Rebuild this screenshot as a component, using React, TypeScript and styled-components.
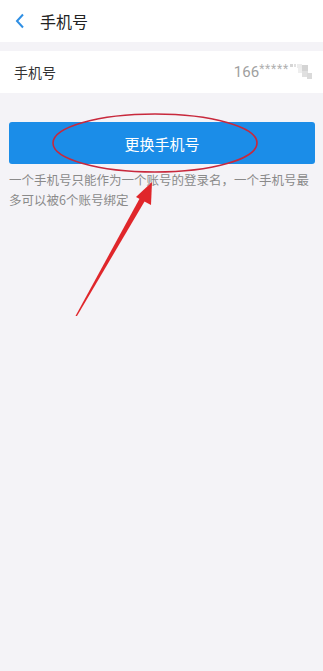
import React from "react";
import styled, { createGlobalStyle } from "styled-components";

const GlobalStyle = createGlobalStyle`
  html, body {
    margin: 0;
    padding: 0;
    background: #f4f3f7;
  }
  body {
    font-family: "Noto Sans CJK SC", "Liberation Sans", sans-serif;
  }
`;

const Page = styled.div`
  position: relative;
  width: 323px;
  height: 671px;
  background: #f4f3f7;
  overflow: hidden;
`;

const Header = styled.div`
  height: 42px;
  background: #ffffff;
  display: flex;
  align-items: center;
  padding-left: 14px;
  gap: 14px;
`;

const Title = styled.div`
  font-size: 16px;
  color: #222;
  line-height: 1;
`;

const Section = styled.div`
  margin-top: 9px;
  background: #ffffff;
`;

const Row = styled.div`
  height: 42px;
  display: flex;
  align-items: center;
  justify-content: space-between;
  padding: 0 11px 0 14px;
`;

const Label = styled.span`
  font-size: 14px;
  color: #333;
`;

const Value = styled.span`
  display: flex;
  align-items: center;
  font-size: 15px;
  color: #a0a0a0;
  font-family: "Roboto", "Liberation Sans", sans-serif;
`;

const Stars = styled.span`
  font-size: 12px;
  letter-spacing: 0.8px;
  margin-top: -6px;
  color: #b0b0b0;
`;

const Body = styled.div`
  padding: 29px 8px 0 9px;
`;

const ChangeButton = styled.button`
  width: 306px;
  height: 42px;
  border: none;
  border-radius: 3px;
  background: #1b8de8;
  color: #ffffff;
  font-size: 15px;
  font-family: "Noto Sans CJK SC", sans-serif;
  display: block;
`;

const Note = styled.p`
  margin: 6px 0 0;
  font-size: 12.5px;
  line-height: 20px;
  color: #8a8a8a;
`;

const Overlay = styled.svg`
  position: absolute;
  left: 0;
  top: 0;
  pointer-events: none;
`;

const Back = () => (
  <svg width="12" height="16" viewBox="0 0 12 16">
    <path d="M9 1.5 L3 8 L9 14.5" fill="none" stroke="#2f8fe4" strokeWidth="2" />
  </svg>
);

const Mosaic = () => (
  <svg width="22" height="16" viewBox="0 0 22 16" style={{ marginLeft: 1 }}>
    <rect x="0" y="0" width="3" height="3" fill="#d6d6d6" />
    <rect x="4" y="0" width="2" height="3" fill="#e0e0e0" />
    <rect x="7" y="0" width="5" height="4" fill="#ececec" />
    <rect x="12" y="1" width="6" height="6" fill="#d4d4d4" />
    <rect x="12" y="7" width="6" height="6" fill="#e0e0e0" />
    <rect x="17" y="9" width="5" height="6" fill="#dadada" />
    <rect x="8" y="4" width="4" height="5" fill="#eeeeee" />
  </svg>
);

export default function App() {
  return (
    <>
      <GlobalStyle />
      <Page>
        <Header>
          <Back />
          <Title>手机号</Title>
        </Header>
        <Section>
          <Row>
            <Label>手机号</Label>
            <Value>
              166<Stars>*****</Stars>
              <Mosaic />
            </Value>
          </Row>
        </Section>
        <Body>
          <ChangeButton>更换手机号</ChangeButton>
          <Note>
            一个手机号只能作为一个账号的登录名，一个手机号最多可以被6个账号绑定
          </Note>
        </Body>
        <Overlay width="323" height="671" viewBox="0 0 323 671">
          <ellipse
            cx="155"
            cy="143"
            rx="102"
            ry="29"
            fill="none"
            stroke="#c8283c"
            strokeWidth="1.6"
          />
          <polygon points="75.5,316 77,316 146,199 141,196" fill="#e0262b" />
          <polygon points="152,182 136,197 151,205" fill="#e0262b" />
        </Overlay>
      </Page>
    </>
  );
}
